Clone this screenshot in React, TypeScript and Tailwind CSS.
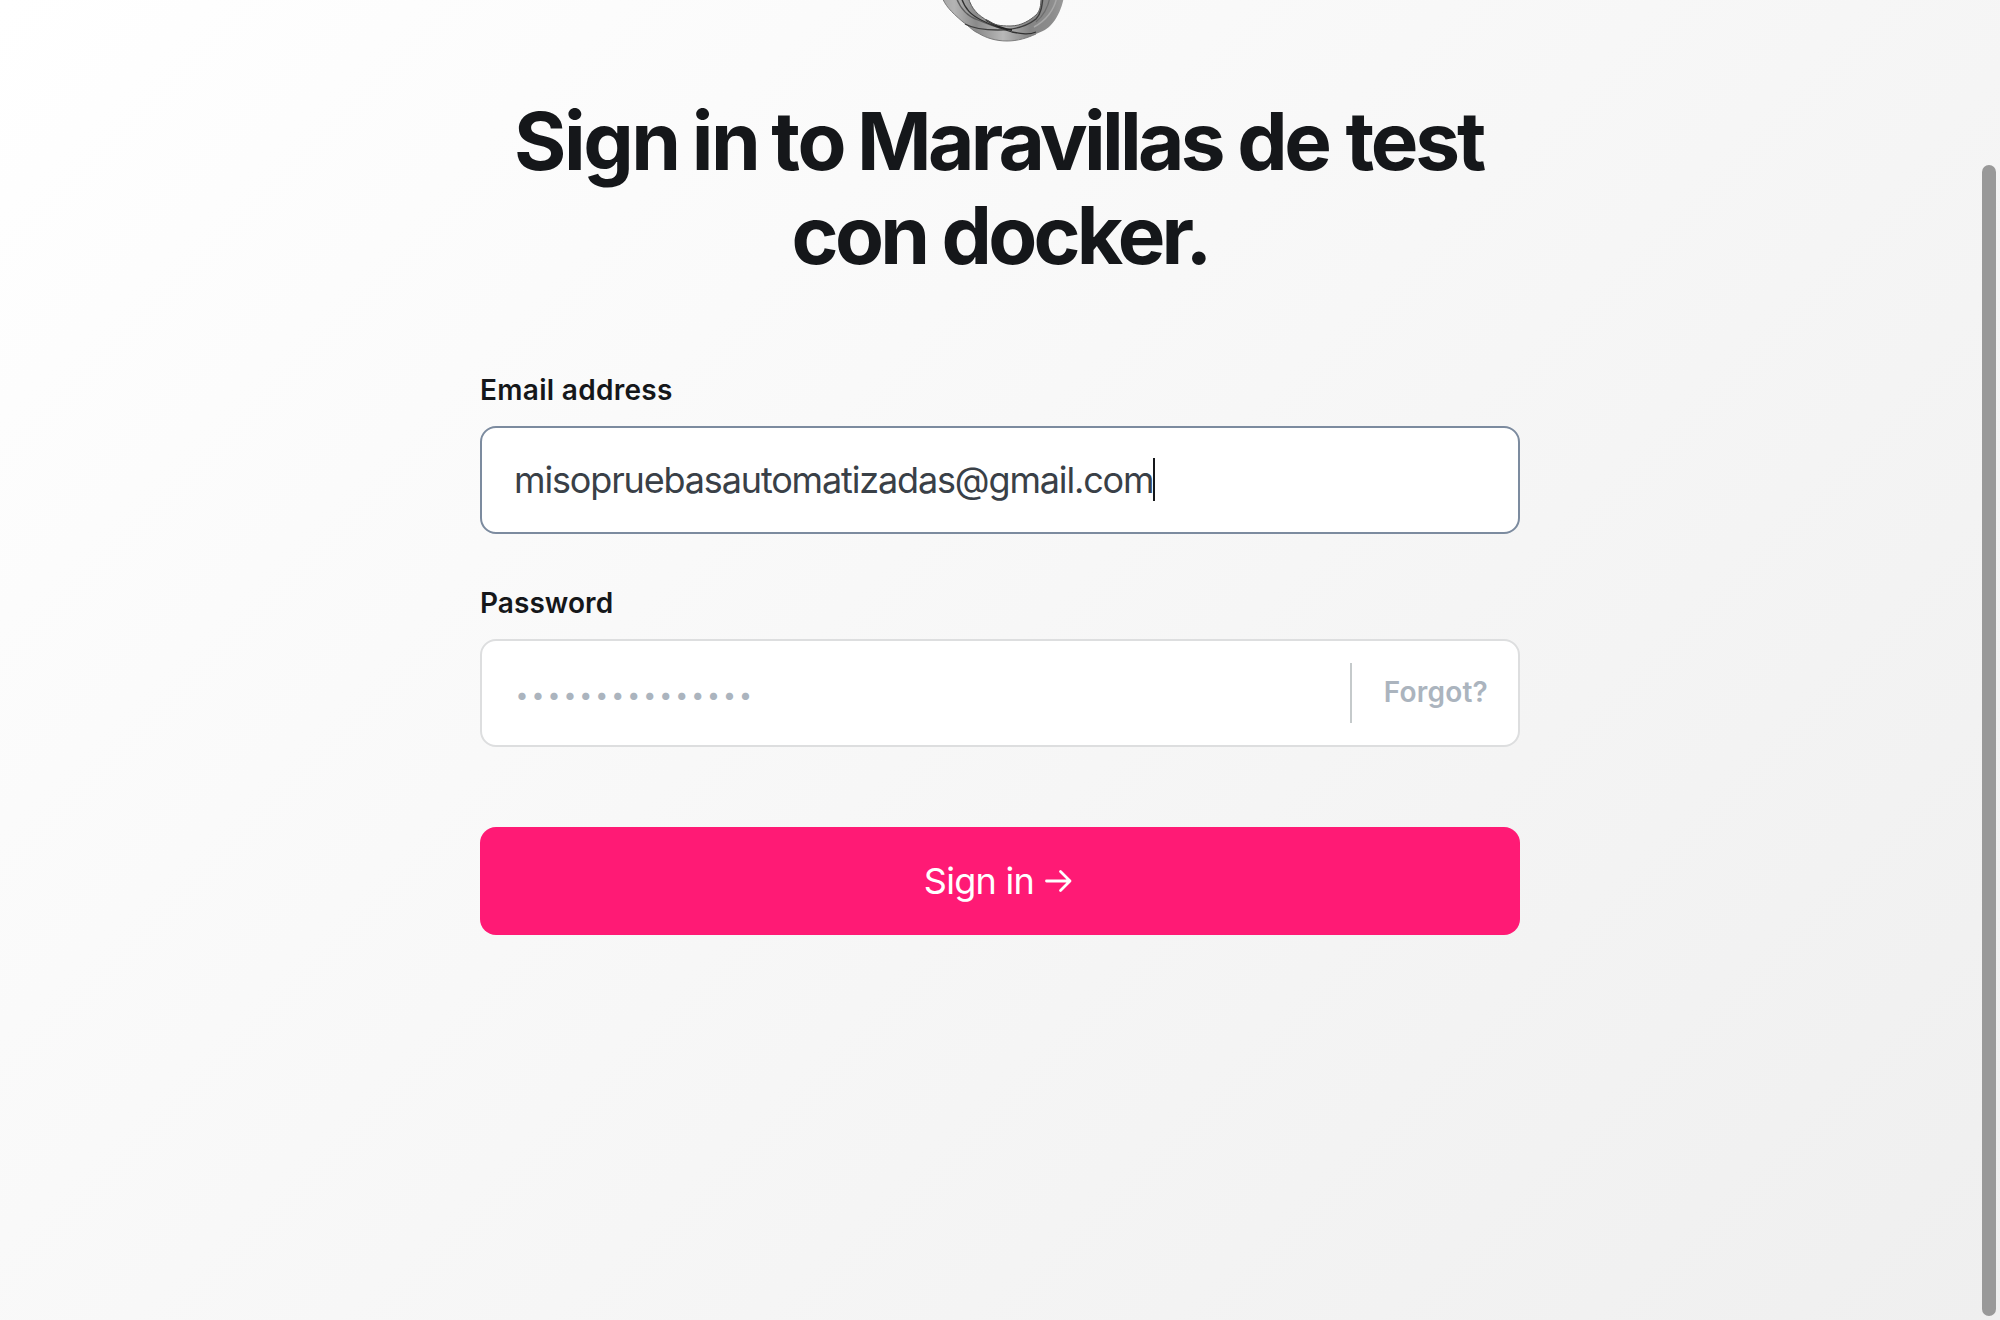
import type { ReactNode } from 'react';

function RingLogo() {
  return (
    <svg className="h-[44px] w-[160px]" viewBox="920 0 160 44" fill="none">
      <defs>
        <linearGradient id="ring" x1="942" y1="0" x2="1064" y2="0" gradientUnits="userSpaceOnUse">
          <stop offset="0" stopColor="#a6a6a6" />
          <stop offset="0.1" stopColor="#b4b4b4" />
          <stop offset="0.28" stopColor="#8a8a8a" />
          <stop offset="0.5" stopColor="#b8b8b8" />
          <stop offset="0.72" stopColor="#858585" />
          <stop offset="0.9" stopColor="#8c8c8c" />
          <stop offset="1" stopColor="#9a9a9a" />
        </linearGradient>
        <filter id="soft" x="-10%" y="-10%" width="120%" height="120%">
          <feGaussianBlur stdDeviation="0.5" />
        </filter>
      </defs>
      <g filter="url(#soft)">
        <path d="M942 -3C945 5 950 11 963 22C970 27 973 31 978 33C986 38 996 41 1007 41C1018 41 1027 38 1036 34C1046 30 1049 28 1055 20C1060 12 1062 6 1064 -3H1041C1041 6 1040 11 1036 15C1030 20 1022 26 1010 26C1000 26 994 25 988 21C978 15 972 10 968 -3Z" fill="url(#ring)" />
        <path d="M942 -3C945 5 950 11 963 22C970 27 973 31 978 33C986 38 996 41 1007 41C1018 41 1027 38 1036 34" stroke="#707070" strokeWidth="0.9" />
        <path d="M956 -3C960 8 966 16 978 20C985 23 992 26 1000 28" stroke="#5c5c5c" strokeWidth="1.3" />
        <path d="M961 -3C965 9 971 15 981 20C991 25 1002 29 1012 32C1022 34 1029 35 1036 32" stroke="#303030" strokeWidth="1.3" />
        <path d="M965 24C974 29 984 30 998 30C1014 30 1026 27 1036 19C1041 14 1042 6 1043 -3" stroke="#3c3c3c" strokeWidth="1.4" />
        <path d="M986 20C994 25 1003 29 1012 30" stroke="#242424" strokeWidth="1.8" />
        <path d="M968 -3C972 10 978 15 988 21C994 25 1000 26 1010 26C1022 26 1030 20 1036 15C1040 11 1041 6 1041 -3" stroke="#5a5a5a" strokeWidth="1" />
        <path d="M1057 -3C1054 10 1047 20 1034 27" stroke="#a8a8a8" strokeWidth="1.5" />
        <path d="M1050 -3C1048 8 1043 16 1036 22" stroke="#6d6d6d" strokeWidth="1.2" />
      </g>
    </svg>
  );
}

function Field({ label, focused, children }: { label: ReactNode; focused?: boolean; children: ReactNode }) {
  return (
    <div className="flex flex-col">
      <label className="h-[34px] text-[28px] leading-[34px] font-semibold text-[#15171a]">{label}</label>
      <div
        className={
          focused
            ? 'mt-[19px] flex h-[108px] items-center rounded-2xl border-2 border-[#7c8b9f] bg-white pl-8'
            : 'mt-[19px] flex h-[108px] items-center rounded-2xl border-2 border-[#dddedf] bg-white pl-8'
        }
      >
        {children}
      </div>
    </div>
  );
}

export default function App() {
  return (
    <div className="flex h-[1320px] w-[2000px] overflow-hidden bg-linear-135 from-white to-[#efefef] font-['Inter',sans-serif]">
      <main className="ml-[480px] flex w-[1040px] flex-col">
        <header className="flex flex-col items-center">
          <RingLogo />
          <h1 className="mt-[50px] text-center text-[80px] leading-[94px] font-bold whitespace-nowrap text-[#15171a]">
            <span className="tracking-[-2.4px] [word-spacing:-3.6px]">Sign in to </span>
            <span className="tracking-[-3.7px]">Maravillas </span>
            <span className="mr-[3px] tracking-[-3.2px] [word-spacing:1px]">de test</span>
            <br />
            <span className="tracking-[-3.75px]">con docker.</span>
          </h1>
        </header>
        <form className="mt-[91px] flex flex-col">
          <Field label={<span className="tracking-[0.3px]">Email address</span>} focused>
            <span className="text-[36px] leading-[44px] tracking-[-1.15px] text-[#394047]">misopruebasautomatizadas@gmail.com</span>
            <span className="mb-px h-[43px] w-[2px] bg-[#15171a]" />
          </Field>
          <div className="h-[52px]" />
          <Field label={<span className="tracking-[0.05px]">Password</span>}>
            <span className="mt-[3px] ml-[1.5px] text-[23px] leading-[44px] tracking-[3.03px] text-[#abb4be]">•••••••••••••••</span>
            <span className="ml-auto h-[60px] w-[2px] bg-[#c5cacb]" />
            <button type="button" className="mr-[30px] mb-0.5 ml-8 text-[28px] leading-[34px] font-semibold tracking-[0.2px] text-[#abb4be]">
              Forgot?
            </button>
          </Field>
          <button type="button" className="mt-20 flex h-[108px] items-center justify-center gap-[11px] rounded-2xl bg-[#ff1a75] pr-[3px] text-[36px] text-white">
            <span className="tracking-[-0.7px]">Sign in</span>
            <svg className="h-[28px] w-[28px]" viewBox="0 0 28 28" fill="none" stroke="currentColor" strokeWidth="2.8" strokeLinecap="round" strokeLinejoin="round">
              <path d="M1.5 14H25M15.5 4.5L25 14L15.5 23.5" />
            </svg>
          </button>
        </form>
      </main>
      <div className="mt-[165px] mr-1 ml-auto h-[1151px] w-[14px] rounded-full bg-[#999]" />
    </div>
  );
}
